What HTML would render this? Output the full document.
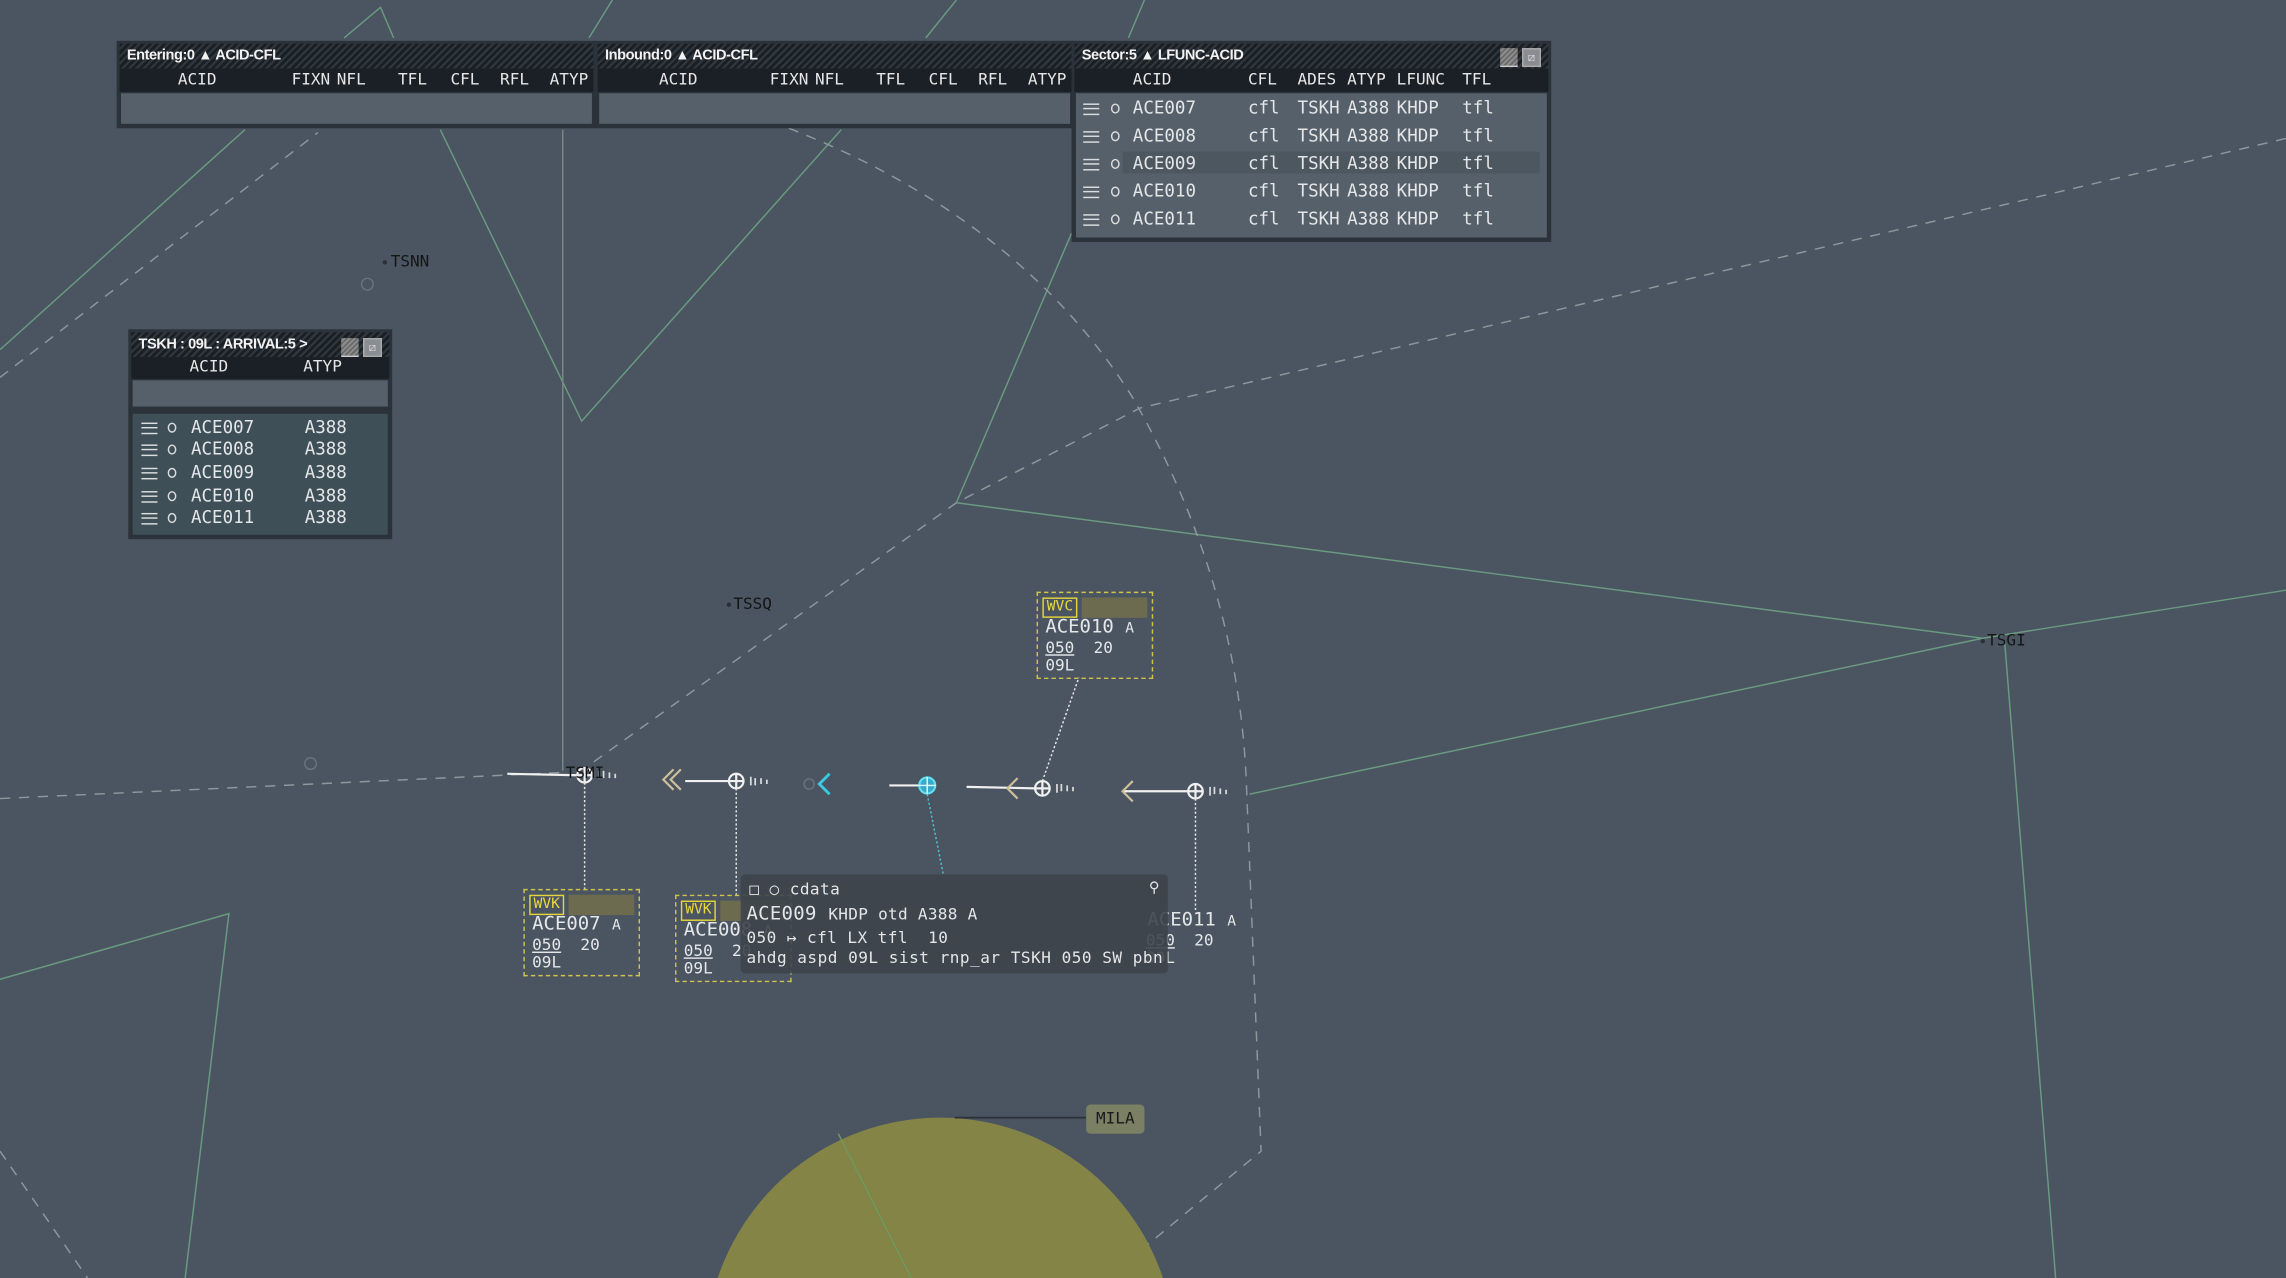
<!DOCTYPE html>
<html><head><meta charset="utf-8"><style>
html,body{margin:0;padding:0;width:2286px;height:1278px;overflow:hidden;background:#4a5561}
#s{position:absolute;left:0;top:0;width:1568px;height:877px;overflow:hidden;transform:scale(1.4579,1.4572);transform-origin:0 0;font-family:"DejaVu Sans Mono","Liberation Mono",monospace;color:#e4e6e8}
.a{position:absolute;white-space:nowrap}
.pn{position:absolute;background:#2b3239;box-sizing:border-box}
.hd{position:absolute;left:2px;right:2px;top:2px;height:17px;background:repeating-linear-gradient(135deg,#1a1f24 0 2px,#30373e 2px 3.5px)}
.ht{position:absolute;left:5px;top:3px;font:bold 10px "Liberation Sans",sans-serif;color:#f2f2f2;letter-spacing:-0.3px}
.ch{position:absolute;left:2px;right:2px;top:19px;height:16px;background:#1b2026}
.c{position:absolute;font-size:11px;color:#e6e6e6;top:1px}
.t{position:absolute;font-size:12px;color:#e4e6e8;white-space:nowrap;line-height:14px}
.m{position:absolute;width:11px;height:8px;border-top:1.3px solid #ddd;border-bottom:1.3px solid #ddd;box-sizing:border-box}
.m:after{content:"";position:absolute;left:0;right:0;top:2px;border-top:1.3px solid #ddd}
.o{position:absolute;width:6px;height:7px;border:1.3px solid #ddd;border-radius:50%;box-sizing:border-box}
.bt{position:absolute;width:12px;height:12px;background:repeating-linear-gradient(135deg,#666 0 1px,#8a8a8a 1px 2.5px);border-bottom:1px solid #ccc}
.bt2{position:absolute;width:11px;height:11px;background:#8a8e92;border:1px solid #aaa;font-size:8px;line-height:11px;text-align:center;color:#ddd}
.lb{position:absolute;border:1.5px dashed #cfc34c;box-sizing:border-box}
.wv{position:absolute;left:3px;top:3px;height:12px;border:1.2px solid #e3d43c;color:#e8d83c;font-size:10px;line-height:12px;padding:0 2px}
.ob{position:absolute;top:3px;height:14px;background:#6c6b4f;right:3px}
</style></head><body><div id="s">
<svg width="1568" height="877" style="position:absolute;left:0;top:0;display:block" fill="none">
<g stroke="#6a9a80" stroke-width="1">
<path d="M0 240 L168 89"/><path d="M236 26 L261 5 L270 26"/>
<path d="M302 89 L399 289 L577 89"/>
<path d="M404 26 L420 0 M635 26 L656 0 M774 26 L785 0"/>
<path d="M735 160 L656 345 L1360 438 L1568 405"/>
<path d="M1360 438 L857 545"/><path d="M1375 440 L1410 877"/>
<path d="M0 672 L157 627 L127 877"/>
</g>
<path d="M386 89 L386 529" stroke="#7a8a80" stroke-width="1"/>
<g stroke="#8e979e" stroke-width="1" stroke-dasharray="7 6">
<path d="M0 259 L218 91"/>
<path d="M0 548 L388 530"/>
<path d="M1568 95 L782 280 L656 345 L400 528"/>
<path d="M541 88 Q700 150 777 273 Q850 400 855 540 L865 790 L780 860"/>
<path d="M0 790 L60 877"/>
</g>
<circle cx="645" cy="928" r="161" fill="#858447"/>
<path d="M575 778 L625 877" stroke="#6f9a5e" stroke-width="1"/>
<path d="M655 767 L745 767" stroke="#2a3036" stroke-width="1.2"/>
<g fill="#2a3036"><circle cx="264" cy="180" r="1.5"/><circle cx="500" cy="415" r="1.5"/><circle cx="1360" cy="440" r="1.5"/></g>
<g stroke="#6a737b" fill="none"><circle cx="252" cy="195" r="4"/><circle cx="213" cy="524" r="4"/><circle cx="555" cy="538" r="3.5"/></g>
<g stroke="#f0f0f0" stroke-width="1.5" fill="none">
<path d="M348 531 L396 532"/><circle cx="401" cy="532" r="5"/><path d="M396 532h10M401 527v10"/>
<path d="M470 536 L500 536"/><circle cx="505" cy="536" r="5"/><path d="M500 536h10M505 531v10"/>
<path d="M663 540 L710 541"/><circle cx="715" cy="541" r="5"/><path d="M710 541h10M715 536v10"/>
<path d="M770 543 L815 543"/><circle cx="820" cy="543" r="5"/><path d="M815 543h10M820 538v10"/>
<path d="M610 539 L631 539"/>
</g>
<g stroke="#d8dadc" stroke-width="1.2">
<path d="M411 529v5M414 529v5M418 530v4M422 531v3"/>
<path d="M515 533v6M518 534v5M522 534v4M526 535v3"/>
<path d="M725 538v6M728 538v5M732 539v4M736 540v3"/>
<path d="M830 540v6M833 540v5M837 541v4M841 542v3"/>
</g>
<g stroke="#cdbf9a" stroke-width="1.5" fill="none">
<path d="M462 528 L455 535 L462 542M467 528 L460 535 L467 542"/>
<path d="M698 534 L691 541 L698 548"/>
<path d="M777 536 L770 543 L777 550"/>
</g>
<path d="M569 531 L562 538 L569 545" stroke="#3cc8e0" stroke-width="2" fill="none"/>
<circle cx="636" cy="539" r="5.5" fill="#3aa8c8" stroke="#5fe0f0" stroke-width="1.5"/><path d="M630 539h12M636 533v12" stroke="#dff" stroke-width="1"/>
<g stroke="#e6e6e6" stroke-width="1" stroke-dasharray="1.5 1.5">
<path d="M401 537 L401 610"/><path d="M505 541 L505 614"/><path d="M820 548 L820 625"/><path d="M715 536 L740 465"/>
</g>
<path d="M636 545 L647 600" stroke="#4ec0d0" stroke-width="1" stroke-dasharray="1.5 1.5"/>
</svg>
<div class="a" style="left:268px;top:173px;font-size:11px;color:#151515">TSNN</div>
<div class="a" style="left:503px;top:408px;font-size:11px;color:#151515">TSSQ</div>
<div class="a" style="left:1363px;top:433px;font-size:11px;color:#151515">TSGI</div>
<div class="a" style="left:388px;top:524px;font-size:11px;color:#151515">TSMI</div>
<div class="a" style="left:745px;top:758px;width:40px;height:20px;background:#7b7f63;border-radius:3px;font-size:11px;line-height:20px;text-align:center;color:#1a1a1a">MILA</div>

<div class="pn" style="left:80px;top:28px;width:329px;height:60px">
<div class="hd"><span class="ht">Entering:0 ▲ ACID-CFL</span></div>
<div class="ch"><span class="c" style="left:40px">ACID</span><span class="c" style="left:118px">FIXN</span><span class="c" style="left:149px">NFL</span><span class="c" style="left:191px">TFL</span><span class="c" style="left:227px">CFL</span><span class="c" style="left:261px">RFL</span><span class="c" style="left:295px">ATYP</span></div>
<div style="position:absolute;left:3px;right:3px;top:36px;bottom:3px;background:#56606a"></div>
</div>
<div class="pn" style="left:408px;top:28px;width:329px;height:60px">
<div class="hd"><span class="ht">Inbound:0 ▲ ACID-CFL</span></div>
<div class="ch"><span class="c" style="left:42px">ACID</span><span class="c" style="left:118px">FIXN</span><span class="c" style="left:149px">NFL</span><span class="c" style="left:191px">TFL</span><span class="c" style="left:227px">CFL</span><span class="c" style="left:261px">RFL</span><span class="c" style="left:295px">ATYP</span></div>
<div style="position:absolute;left:3px;right:3px;top:36px;bottom:3px;background:#56606a"></div>
</div>
<div class="pn" style="left:735px;top:28px;width:329px;height:138px">
<div class="hd"><span class="ht">Sector:5 ▲ LFUNC-ACID</span><div class="bt" style="left:292px;top:3px"></div><div class="bt2" style="left:307px;top:3px">⧄</div></div>
<div class="ch"><span class="c" style="left:40px">ACID</span><span class="c" style="left:119px">CFL</span><span class="c" style="left:153px">ADES</span><span class="c" style="left:187px">ATYP</span><span class="c" style="left:221px">LFUNC</span><span class="c" style="left:266px">TFL</span></div>
<div style="position:absolute;left:3px;right:3px;top:36px;bottom:3px;background:#56606a"></div>
<div style="position:absolute;left:35px;right:8px;top:76px;height:15px;background:#4d5760"></div>
</div>
<div class="pn" style="left:88px;top:226px;width:181px;height:144px">
<div class="hd"><span class="ht">TSKH : 09L : ARRIVAL:5 &gt;</span><div class="bt" style="left:144px;top:4px"></div><div class="bt2" style="left:159px;top:4px">⧄</div></div>
<div class="ch" style="height:15px"><span class="c" style="left:40px;top:0">ACID</span><span class="c" style="left:118px;top:0">ATYP</span></div>
<div style="position:absolute;left:3px;right:3px;top:35px;height:18px;background:#56606a"></div>
<div style="position:absolute;left:3px;right:3px;top:58px;bottom:3px;background:#3e4f58"></div>
</div>

<div class="m" style="left:743px;top:71px"></div><div class="o" style="left:762px;top:71px"></div><span class="t" style="left:777px;top:67px">ACE007</span><span class="t" style="left:856px;top:67px">cfl</span><span class="t" style="left:890px;top:67px">TSKH</span><span class="t" style="left:924px;top:67px">A388</span><span class="t" style="left:958px;top:67px">KHDP</span><span class="t" style="left:1003px;top:67px">tfl</span>
<div class="m" style="left:743px;top:90px"></div><div class="o" style="left:762px;top:90px"></div><span class="t" style="left:777px;top:86px">ACE008</span><span class="t" style="left:856px;top:86px">cfl</span><span class="t" style="left:890px;top:86px">TSKH</span><span class="t" style="left:924px;top:86px">A388</span><span class="t" style="left:958px;top:86px">KHDP</span><span class="t" style="left:1003px;top:86px">tfl</span>
<div class="m" style="left:743px;top:109px"></div><div class="o" style="left:762px;top:109px"></div><span class="t" style="left:777px;top:105px">ACE009</span><span class="t" style="left:856px;top:105px">cfl</span><span class="t" style="left:890px;top:105px">TSKH</span><span class="t" style="left:924px;top:105px">A388</span><span class="t" style="left:958px;top:105px">KHDP</span><span class="t" style="left:1003px;top:105px">tfl</span>
<div class="m" style="left:743px;top:128px"></div><div class="o" style="left:762px;top:128px"></div><span class="t" style="left:777px;top:124px">ACE010</span><span class="t" style="left:856px;top:124px">cfl</span><span class="t" style="left:890px;top:124px">TSKH</span><span class="t" style="left:924px;top:124px">A388</span><span class="t" style="left:958px;top:124px">KHDP</span><span class="t" style="left:1003px;top:124px">tfl</span>
<div class="m" style="left:743px;top:147px"></div><div class="o" style="left:762px;top:147px"></div><span class="t" style="left:777px;top:143px">ACE011</span><span class="t" style="left:856px;top:143px">cfl</span><span class="t" style="left:890px;top:143px">TSKH</span><span class="t" style="left:924px;top:143px">A388</span><span class="t" style="left:958px;top:143px">KHDP</span><span class="t" style="left:1003px;top:143px">tfl</span>
<div class="m" style="left:97px;top:290px"></div><div class="o" style="left:115px;top:290px"></div><span class="t" style="left:131px;top:286px">ACE007</span><span class="t" style="left:209px;top:286px">A388</span>
<div class="m" style="left:97px;top:305px"></div><div class="o" style="left:115px;top:305px"></div><span class="t" style="left:131px;top:301px">ACE008</span><span class="t" style="left:209px;top:301px">A388</span>
<div class="m" style="left:97px;top:321px"></div><div class="o" style="left:115px;top:321px"></div><span class="t" style="left:131px;top:317px">ACE009</span><span class="t" style="left:209px;top:317px">A388</span>
<div class="m" style="left:97px;top:337px"></div><div class="o" style="left:115px;top:337px"></div><span class="t" style="left:131px;top:333px">ACE010</span><span class="t" style="left:209px;top:333px">A388</span>
<div class="m" style="left:97px;top:352px"></div><div class="o" style="left:115px;top:352px"></div><span class="t" style="left:131px;top:348px">ACE011</span><span class="t" style="left:209px;top:348px">A388</span>

<div class="lb" style="left:711px;top:406px;width:80px;height:60px"><div class="ob" style="left:30px"></div><div class="wv">WVC</div>
<div class="a" style="left:5px;top:16px;font-size:13px">ACE010 <span style="font-size:10px">A</span></div>
<div class="a" style="left:5px;top:31px;font-size:11px"><u>050</u>&nbsp;&nbsp;20</div>
<div class="a" style="left:5px;top:43px;font-size:11px">09L</div></div>
<div class="lb" style="left:359px;top:610px;width:80px;height:60px"><div class="ob" style="left:30px"></div><div class="wv">WVK</div>
<div class="a" style="left:5px;top:16px;font-size:13px">ACE007 <span style="font-size:10px">A</span></div>
<div class="a" style="left:5px;top:31px;font-size:11px"><u>050</u>&nbsp;&nbsp;20</div>
<div class="a" style="left:5px;top:43px;font-size:11px">09L</div></div>
<div class="lb" style="left:463px;top:614px;width:80px;height:60px"><div class="ob" style="left:30px"></div><div class="wv">WVK</div>
<div class="a" style="left:5px;top:16px;font-size:13px">ACE008 <span style="font-size:10px">A</span></div>
<div class="a" style="left:5px;top:31px;font-size:11px"><u>050</u>&nbsp;&nbsp;20</div>
<div class="a" style="left:5px;top:43px;font-size:11px">09L</div></div>
<div class="a" style="left:787px;top:624px;font-size:13px">ACE011 <span style="font-size:10px">A</span></div>
<div class="a" style="left:786px;top:639px;font-size:11px"><u>050</u>&nbsp;&nbsp;20</div>
<div class="a" style="left:786px;top:651px;font-size:11px">09L</div>
<div class="a" style="left:508px;top:600px;width:293px;height:68px;background:rgba(62,68,75,0.9);border-radius:3px"></div>
<div class="a" style="left:514px;top:604px;font-size:11px;letter-spacing:0.3px">□ ○ cdata</div>
<div class="a" style="left:788px;top:604px;font-size:10px">⚲</div>
<div class="a" style="left:512px;top:620px;font-size:13px;letter-spacing:0.2px">ACE009 <span style="font-size:11px">KHDP otd A388 A</span></div>
<div class="a" style="left:512px;top:637px;font-size:11px;letter-spacing:0.3px">050 ↦ cfl LX tfl&nbsp;&nbsp;10</div>
<div class="a" style="left:512px;top:651px;font-size:11px;letter-spacing:0.35px">ahdg aspd 09L sist rnp_ar TSKH 050 SW pbn</div>
</div></body></html>
